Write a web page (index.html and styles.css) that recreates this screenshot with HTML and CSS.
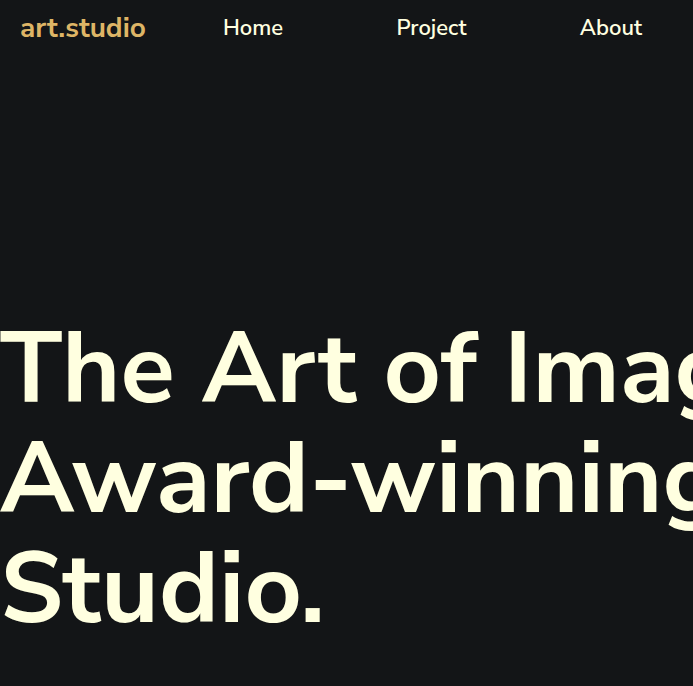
FILE: index.html
```html
<!DOCTYPE html>
<html lang="en">
<head>
<meta charset="utf-8">
<meta name="viewport" content="width=device-width, initial-scale=1">
<title>art.studio</title>
<link rel="stylesheet" href="styles.css">
</head>
<body>
<header class="header">
  <a class="logo" href="#">art.studio</a>
  <nav class="nav">
    <a class="nav-link" href="#home">Home</a>
    <a class="nav-link" href="#project">Project</a>
    <a class="nav-link" href="#about">About</a>
  </nav>
</header>
<main class="hero">
  <h1 class="title">The Art of Imag<br>Award-winning<br>Studio.</h1>
</main>
</body>
</html>
```
FILE: styles.css
```css
body {
  margin: 0;
  min-height: 100vh;
  overflow: hidden;
  background: #131517;
  color: #ffffe0;
  font-family: "Nunito Sans", "Open Sans", "Noto Sans", sans-serif;
}

.header {
  display: flex;
  align-items: center;
  gap: 77px;
  padding: 12px 51px 12px 20px;
}

.logo,
.nav-link {
  line-height: 32px;
  text-decoration: none;
}

.logo {
  color: #deb566;
  font-size: 28px;
  font-weight: 700;
}

.nav {
  display: flex;
  flex: 1;
  justify-content: space-between;
}

.nav-link {
  color: inherit;
  font-size: 22px;
  font-weight: 600;
}

.hero {
  padding-top: 258px;
}

.title {
  margin: 0;
  font-size: 100px;
  font-weight: 700;
  line-height: 110px;
  white-space: nowrap;
}
```
